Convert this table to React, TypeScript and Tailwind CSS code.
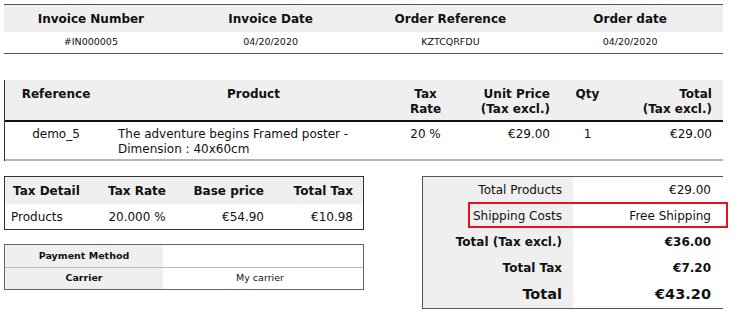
export default function App() {
  const head = "bg-[#efefef]";
  return (
    <div
      className="relative w-[742px] h-[318px] bg-white text-[#111] overflow-hidden"
      style={{ fontFamily: '"DejaVu Sans", Verdana, sans-serif' }}
    >
      {/* Invoice summary */}
      <div className="ml-[4px] mt-[4px] w-[719px] border-t border-b border-[#555]">
        <div className={`grid grid-cols-4 h-[27px] items-center ${head} text-[12px] font-bold`}>
          <div className="text-center pr-[6px]">Invoice Number</div>
          <div className="text-center pr-[6px]">Invoice Date</div>
          <div className="text-center pr-[6px]">Order Reference</div>
          <div className="text-center pr-[6px]">Order date</div>
        </div>
        <div className="grid grid-cols-4 h-[21px] items-center text-[9.5px]">
          <div className="text-center pr-[6px]">#IN000005</div>
          <div className="text-center pr-[6px]">04/20/2020</div>
          <div className="text-center pr-[6px]">KZTCQRFDU</div>
          <div className="text-center pr-[6px]">04/20/2020</div>
        </div>
      </div>

      {/* Product lines */}
      <div className="ml-[4px] mt-[26px] w-[719px] border-l border-[#333]">
        <div
          className={`grid grid-cols-[108px_287px_57px_105px_57px_105px] h-[42px] ${head} border-b-2 border-[#111] text-[12px] font-bold leading-[15px] pt-[7px]`}
        >
          <div className="text-center pl-[5px] pr-[11px]">Reference</div>
          <div className="text-center pl-[5px] pr-[11px]">Product</div>
          <div className="text-center pl-[5px] pr-[11px]">Tax<br />Rate</div>
          <div className="text-right pl-[5px] pr-[12px]">Unit Price<br />(Tax excl.)</div>
          <div className="text-center pl-[5px] pr-[11px]">Qty</div>
          <div className="text-right pl-[5px] pr-[12px]">Total<br />(Tax excl.)</div>
        </div>
        <div className="grid grid-cols-[108px_287px_57px_105px_57px_105px] h-[39px] border-b-2 border-[#b5b5b5] text-[12px] leading-[15px] pt-[5px]">
          <div className="text-center pl-[5px] pr-[11px]">demo_5</div>
          <div className="pl-[5px] pr-[11px]">The adventure begins Framed poster - Dimension : 40x60cm</div>
          <div className="text-center pl-[5px] pr-[11px]">20 %</div>
          <div className="text-right pl-[5px] pr-[12px]">€29.00</div>
          <div className="text-center pl-[5px] pr-[11px]">1</div>
          <div className="text-right pl-[5px] pr-[12px]">€29.00</div>
        </div>
      </div>

      {/* Lower section */}
      <div className="flex mt-[15px] ml-[4px]">
        <div className="w-[360px] flex flex-col gap-[14px]">
          {/* Tax detail */}
          <div className="border border-[#333] text-[12px]">
            <div className={`grid grid-cols-[94px_76px_89px_89px] h-[27px] items-center ${head} font-bold`}>
              <div className="pl-[8px]">Tax Detail</div>
              <div className="text-center">Tax Rate</div>
              <div className="text-right">Base price</div>
              <div className="text-right">Total Tax</div>
            </div>
            <div className="grid grid-cols-[94px_76px_89px_89px] h-[25px] items-center">
              <div className="pl-[6px]">Products</div>
              <div className="text-center">20.000 %</div>
              <div className="text-right">€54.90</div>
              <div className="text-right">€10.98</div>
            </div>
          </div>

          {/* Payment / carrier */}
          <div className="border border-[#666] text-[9.5px]">
            <div className="grid grid-cols-[158px_1fr] h-[23px] border-b border-[#bbb]">
              <div className={`${head} font-bold flex items-center justify-center`}>Payment Method</div>
              <div></div>
            </div>
            <div className="grid grid-cols-[158px_1fr] h-[21px]">
              <div className={`${head} font-bold flex items-center justify-center`}>Carrier</div>
              <div className="flex items-center justify-center pr-[6px]">My carrier</div>
            </div>
          </div>
        </div>

        {/* Totals */}
        <div className="ml-[58px] w-[301px] border-l border-t border-b border-[#555] relative">
          <div className="grid grid-cols-[150px_1fr]">
            <div className={`${head} flex flex-col items-end pr-[11px] text-[12px]`}>
              <div className="h-[26px] flex items-center">Total Products</div>
              <div className="h-[26px] flex items-center">Shipping Costs</div>
              <div className="h-[26px] flex items-center font-bold">Total (Tax excl.)</div>
              <div className="h-[26px] flex items-center font-bold">Total Tax</div>
              <div className="h-[27px] flex items-center font-bold text-[14.5px]">Total</div>
            </div>
            <div className="flex flex-col items-end pr-[12px] text-[12px]">
              <div className="h-[26px] flex items-center">€29.00</div>
              <div className="h-[26px] flex items-center">Free Shipping</div>
              <div className="h-[26px] flex items-center font-bold">€36.00</div>
              <div className="h-[26px] flex items-center font-bold">€7.20</div>
              <div className="h-[27px] flex items-center font-bold text-[14.5px]">€43.20</div>
            </div>
          </div>
          {/* highlight around the shipping line */}
          <div className="absolute left-[45px] top-[25px] w-[260px] h-[26px] border-2 border-[#e5141b]"></div>
        </div>
      </div>
    </div>
  );
}
